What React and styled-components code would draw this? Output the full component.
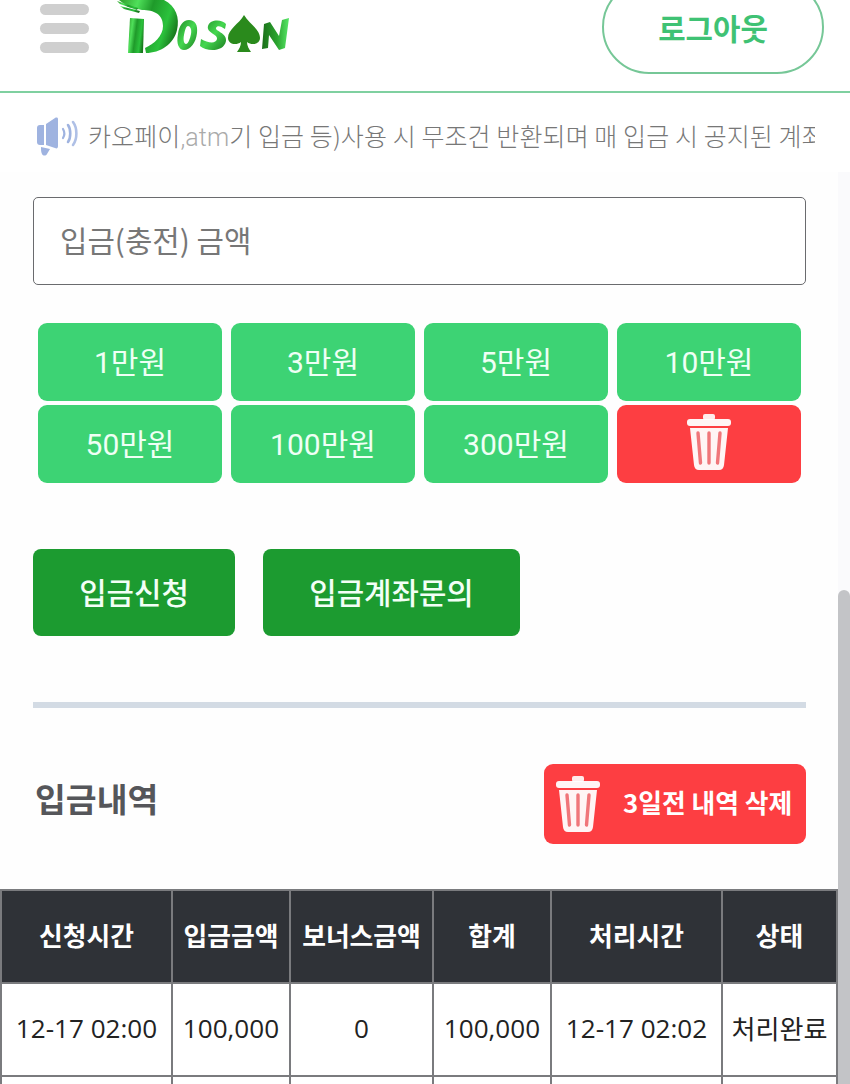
import React from "react";
import styled, { createGlobalStyle } from "styled-components";

const Global = createGlobalStyle`
  html, body { margin: 0; padding: 0; background: #fff; overflow: hidden; }
  body { font-family: "Noto Sans CJK KR", "Noto Sans", sans-serif; }
  * { box-sizing: border-box; }
`;

const Screen = styled.div`
  position: relative;
  width: 850px;
  height: 1084px;
  overflow: hidden;
  background: #fff;
`;

const Header = styled.header`
  height: 93px;
  border-bottom: 2px solid #7fd0a0;
  display: flex;
  align-items: flex-start;
  padding: 0 26px 0 40px;
`;

const Burger = styled.div`
  width: 49px;
  margin-top: 4px;
  display: flex;
  flex-direction: column;
  gap: 8px;
`;

const BurgerBar = styled.span`
  height: 11px;
  border-radius: 6px;
  background: #cfcfcf;
`;

const LogoWrap = styled.div`
  width: 182px;
  height: 56px;
  margin-left: 25px;
  flex: none;
`;

const LogoutButton = styled.button`
  margin-left: auto;
  margin-top: -20px;
  width: 222px;
  height: 94px;
  border: 2px solid #76c797;
  border-radius: 47px;
  background: #fff;
  padding: 0 0 1px;
  color: #3fc274;
  font: 700 29.800px "Noto Sans CJK KR", sans-serif;
`;

const Notice = styled.div`
  height: 79px;
  padding: 7px 35px 0 36px;
  display: flex;
  align-items: center;
  background: #fff;
`;

const NoticeText = styled.div`
  margin-left: 9px;
  flex: 1;
  overflow: hidden;
  white-space: nowrap;
  color: #777;
  font-size: 25px;
  font-weight: 300;
  line-height: 34px;
  letter-spacing: 0.1px;
`;

const Latin = styled.span`
  font-family: "Roboto", sans-serif;
  font-weight: 300;
  color: #aaa;
`;

const Main = styled.main`
  background: #fefefe;
  padding: 25px 44px 0 33px;
`;

const AmountInput = styled.div`
  height: 88px;
  border: 1px solid #6a6b6e;
  border-radius: 5px;
  background: #fff;
  padding: 0 26px 5px;
  display: flex;
  align-items: center;
  color: #777;
  font-size: 29.800px;
  font-weight: 400;
`;

const AmountGrid = styled.div`
  margin: 37.500px 5px 0;
  display: grid;
  grid-template-columns: repeat(4, 184px);
  grid-auto-rows: 78px;
  column-gap: 9px;
  row-gap: 4px;
`;

const AmountButton = styled.div`
  border-radius: 9px;
  background: ${(p) => (p.$danger ? "#fd3e42" : "#3dd374")};
  color: #effff5;
  font-family: "Roboto", "Noto Sans CJK KR", sans-serif;
  font-size: 30px;
  font-weight: 400;
  display: flex;
  align-items: center;
  justify-content: center;
  padding-bottom: 4px;
`;

const Actions = styled.div`
  margin-top: 66.500px;
  display: flex;
  gap: 28px;
`;

const ActionButton = styled.div`
  height: 87px;
  width: ${(p) => p.$w}px;
  border-radius: 8px;
  background: #1c9b30;
  color: #f2fff6;
  font-size: 29.800px;
  font-weight: 500;
  display: flex;
  align-items: center;
  justify-content: center;
  padding-bottom: 4px;
`;

const Divider = styled.div`
  margin-top: 66px;
  height: 6px;
  background: #d3dbe4;
`;

const HistoryHead = styled.div`
  margin-top: 56px;
  display: flex;
  align-items: center;
  justify-content: space-between;
`;

const HistoryTitle = styled.h2`
  margin: 0 0 14px 2px;
  color: #55565a;
  font-size: 33.500px;
  font-weight: 700;
`;

const DeleteOld = styled.div`
  width: 262px;
  height: 80px;
  border-radius: 9px;
  background: #fd3e42;
  color: #fff;
  font-size: 25.800px;
  font-weight: 700;
  display: flex;
  align-items: center;
  padding-left: 12px;
  gap: 23px;
`;

const DeleteLabel = styled.span`
  padding-bottom: 5px;
`;

const TableWrap = styled.div`
  margin: 45px -44px 0 -33px;
  width: 838px;
`;

const Table = styled.table`
  width: 838px;
  table-layout: fixed;
  border-collapse: collapse;
  border: 2px solid #6f7073;
`;

const Th = styled.th`
  height: 93px;
  padding: 0 0 4px;
  background: #2f3237;
  border: 2px solid #7a7b7e;
  color: #fff;
  font-size: 25.800px;
  font-weight: 700;
  text-align: center;
`;

const Td = styled.td`
  height: 93px;
  padding: 0 0 4px;
  background: #fff;
  border: 2px solid #7a7b7e;
  color: #222;
  font-family: "Open Sans", "Noto Sans CJK KR", sans-serif;
  font-size: 26.100px;
  font-weight: 400;
  text-align: center;
  white-space: nowrap;
`;

const ScrollTrack = styled.div`
  position: absolute;
  top: 172px;
  right: 0;
  bottom: 0;
  width: 12px;
  background: #fafafc;
`;

const ScrollThumb = styled.div`
  position: absolute;
  top: 418px;
  bottom: 0;
  left: 0;
  right: 0;
  border-radius: 6px 6px 0 0;
  background: #c3c4c7;
`;

const Trash = ({ w, h }) => (
  <svg width={w} height={h} viewBox="0 0 44 56" fill="none">
    <rect x="16" y="0" width="12" height="6" rx="2" fill="#fff" opacity="0.9" />
    <rect x="0" y="5" width="44" height="7" rx="3" fill="#fff" opacity="0.95" />
    <path d="M3 14H41L37 51C36.700 54 35 56 32 56H12C9 56 7.300 54 7 51Z" fill="#fff" opacity="0.95" />
    <path d="M11 19L13.500 49M22 19V49M33 19L30.500 49" stroke="#f0767a" strokeWidth="3.400" strokeLinecap="round" />
  </svg>
);

const Speaker = () => (
  <svg width="43" height="40" viewBox="0 0 43 40" fill="none">
    <path d="M1 12C1 10 2 9 4 9H8V29H4C2 29 1 28 1 26Z" fill="#9fb3e0" />
    <path d="M10 8L19 2C21 1 22 2 22 3V30C22 32 21 33 19 32L10 29Z" fill="#9fb3e0" />
    <path d="M5 31L14 33L11 38C10 40 7 40 6 38C5 36 5 34 5 31Z" fill="#9fb3e0" />
    <path d="M27 13C28.500 15.500 28.500 19.500 27 22" stroke="#9fb3e0" strokeWidth="2.200" strokeLinecap="round" />
    <path d="M32 9C35 13 35 22 32 26" stroke="#9fb3e0" strokeWidth="2.600" strokeLinecap="round" />
    <path d="M37 6C41.500 12 41.500 23 37 29" stroke="#afc0e6" strokeWidth="2.600" strokeLinecap="round" />
  </svg>
);

const Logo = () => (
  <svg width="182" height="56" viewBox="0 0 182 56">
    <defs>
      <linearGradient id="dg" x1="0" y1="0.200" x2="1" y2="0.500">
        <stop offset="0" stopColor="#36a833" />
        <stop offset="0.25" stopColor="#4fe05a" />
        <stop offset="0.5" stopColor="#1f9a2a" />
        <stop offset="0.8" stopColor="#2bc23c" />
        <stop offset="1" stopColor="#18781d" />
      </linearGradient>
      <linearGradient id="rg" x1="0" y1="0" x2="1" y2="1">
        <stop offset="0" stopColor="#1f8a26" />
        <stop offset="0.5" stopColor="#45d850" />
        <stop offset="1" stopColor="#1c7d20" />
      </linearGradient>
      <linearGradient id="ng" x1="0" y1="0" x2="1" y2="0">
        <stop offset="0" stopColor="#1c6f1a" />
        <stop offset="0.55" stopColor="#2aa32e" />
        <stop offset="1" stopColor="#58e868" />
      </linearGradient>
    </defs>
    <g fill="url(#dg)">
      <path d="M5 0L50 0C62 6 66 18 63 30C60 44 46 53 32 53L31 48C40 44 49 36 49 26C49 14 40 10 28 10L14 7Z" />
      <path d="M3 1L24 8L23 10L6 4ZM6 6L26 11L25 13L10 9Z" />
      <path d="M16 18L30 19L29 53H14Z" />
    </g>
    <path fill="url(#rg)" d="M75 20C81 20 84 25 83 33C82 43 76 50 70 50C65 50 62 44 64 34C65 26 69 20 75 20ZM74 26C72 26 71 30 70 35C69 40 70 44 72 44C74 44 76 39 77 34C78 29 76 26 74 26Z" />
    <path fill="url(#rg)" d="M112 24C108 19 96 19 94 26C92 33 104 34 103 39C102 44 94 43 87 39L86 46C93 52 110 52 112 41C113 33 101 31 102 28C103 25 107 26 111 29Z" />
    <path fill="#2a8a1c" d="M130 15C135 24 146 29 146 38C146 44 138 46 133 42C133 46 135 49 137 52H123C125 49 127 46 127 42C122 46 114 44 114 38C114 29 125 24 130 15Z" />
    <path fill="url(#ng)" d="M148 49L150 24L156 22L165 36L168 20L175 18L171 48L165 50L155 35L154 48Z" />
  </svg>
);

const amounts = ["1만원", "3만원", "5만원", "10만원", "50만원", "100만원", "300만원"];
const headers = [
  ["신청시간", 171],
  ["입금금액", 118],
  ["보너스금액", 143],
  ["합계", 118],
  ["처리시간", 171],
  ["상태", 115],
];
const cells = ["12-17 02:00", "100,000", "0", "100,000", "12-17 02:02", "처리완료"];

export default function App() {
  return (
    <Screen>
      <Global />
      <Header>
        <Burger>
          <BurgerBar />
          <BurgerBar />
          <BurgerBar />
        </Burger>
        <LogoWrap>
          <Logo />
        </LogoWrap>
        <LogoutButton>로그아웃</LogoutButton>
      </Header>
      <Notice>
        <Speaker />
        <NoticeText>
          카오페이<Latin>,atm</Latin>기 입금 등)사용 시 무조건 반환되며 매 입금 시 공지된 계좌로 입금해 주세요
        </NoticeText>
      </Notice>
      <Main>
        <AmountInput>입금(충전) 금액</AmountInput>
        <AmountGrid>
          {amounts.map((a) => (
            <AmountButton key={a}>{a}</AmountButton>
          ))}
          <AmountButton $danger>
            <Trash w={44} h={56} />
          </AmountButton>
        </AmountGrid>
        <Actions>
          <ActionButton $w={202}>입금신청</ActionButton>
          <ActionButton $w={257}>입금계좌문의</ActionButton>
        </Actions>
        <Divider />
        <HistoryHead>
          <HistoryTitle>입금내역</HistoryTitle>
          <DeleteOld>
            <Trash w={44} h={56} />
            <DeleteLabel>3일전 내역 삭제</DeleteLabel>
          </DeleteOld>
        </HistoryHead>
        <TableWrap>
          <Table>
            <colgroup>
              {headers.map(([h, w]) => (
                <col key={h} style={{ width: w }} />
              ))}
            </colgroup>
            <thead>
              <tr>
                {headers.map(([h]) => (
                  <Th key={h}>{h}</Th>
                ))}
              </tr>
            </thead>
            <tbody>
              <tr>
                {cells.map((c, i) => (
                  <Td key={i}>{c}</Td>
                ))}
              </tr>
              <tr>
                {cells.map((_, i) => (
                  <Td key={i}>&nbsp;</Td>
                ))}
              </tr>
            </tbody>
          </Table>
        </TableWrap>
      </Main>
      <ScrollTrack>
        <ScrollThumb />
      </ScrollTrack>
    </Screen>
  );
}
